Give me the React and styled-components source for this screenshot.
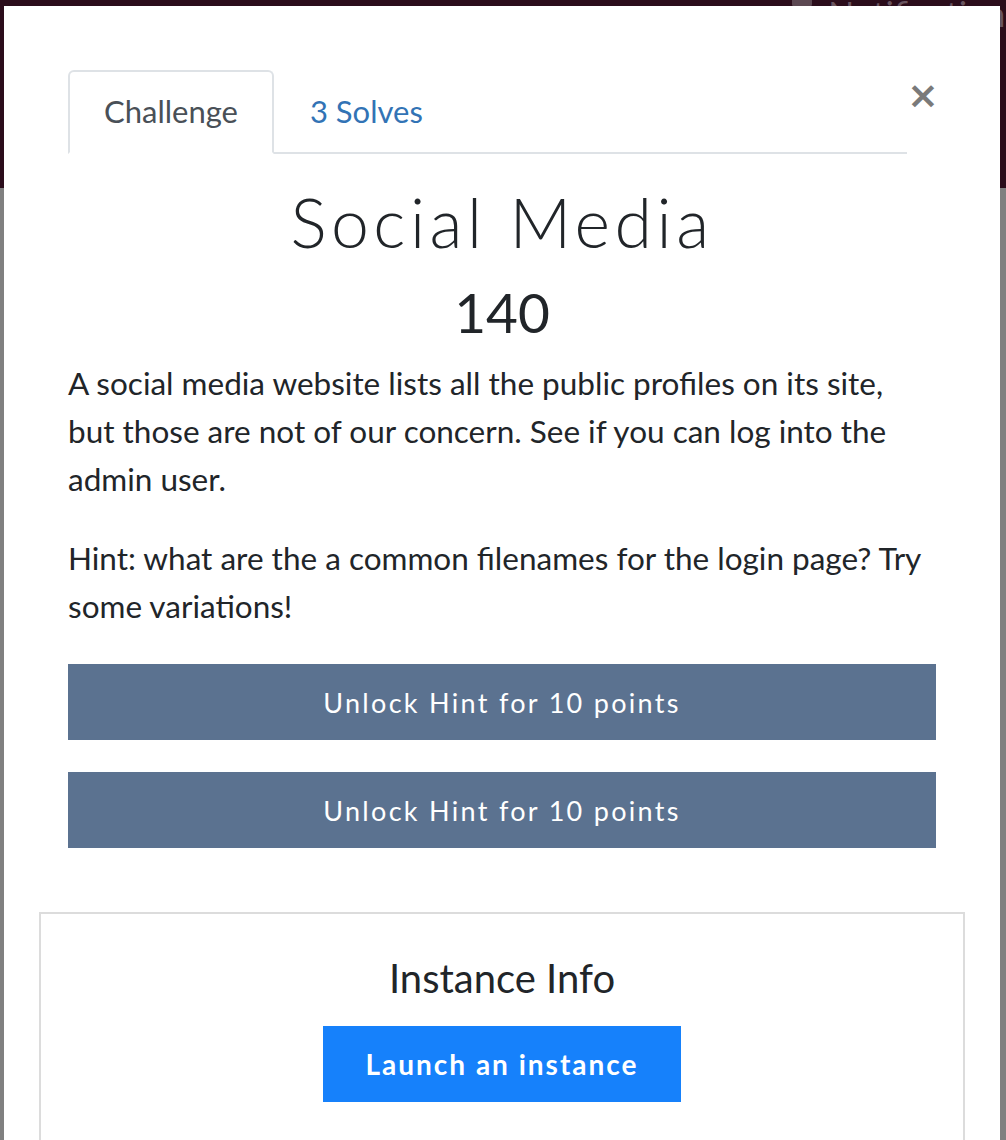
import styled, { createGlobalStyle } from "styled-components";

const GlobalStyle = createGlobalStyle`
  html, body {
    margin: 0;
    padding: 0;
    background: #808080;
    font-family: Lato, "Liberation Sans", sans-serif;
    overflow: hidden;
  }
`

const hints = [
  { id: 1, cost: 10 },
  { id: 2, cost: 10 },
];

const App = () => {
  return (
    <>
      <GlobalStyle />
      <Screen>
        <NavBar>
          <NavItem>
            <NavIcon />
            Notifications
          </NavItem>
        </NavBar>
        <PageBelow />

        <Modal>
          <HeaderRow>
            <Tabs>
              <Tab active>Challenge</Tab>
              <Tab>3 Solves</Tab>
            </Tabs>
            <Close>&times;</Close>
          </HeaderRow>

          <Title>Social Media</Title>
          <Value>140</Value>

          <Description>
            A social media website lists all the public profiles on its site,
            but those are not of our concern. See if you can log into the
            admin user.
          </Description>
          <Description>
            Hint: what are the a common filenames for the login page? Try
            some variations!
          </Description>

          <HintList>
            {hints.map((hint) => (
              <HintButton key={hint.id}>Unlock Hint for {hint.cost} points</HintButton>
            ))}
          </HintList>

          <InstanceBox>
            <InstanceTitle>Instance Info</InstanceTitle>
            <LaunchButton>Launch an instance</LaunchButton>
          </InstanceBox>
        </Modal>
      </Screen>
    </>
  )
}

export default App;

const Screen = styled.div`
  position: relative;
  height: 1140px;
  overflow: hidden;
`

const NavBar = styled.div`
  display: flex;
  justify-content: flex-end;
  align-items: flex-start;
  height: 188px;
  background: #2b0d1b;
`

const NavItem = styled.div`
  display: flex;
  align-items: flex-start;
  gap: 16px;
  margin-top: -3px;
  margin-right: -14px;
  font-size: 34px;
  line-height: 34px;
  color: #6a5560;
`

const NavIcon = styled.span`
  display: block;
  width: 20px;
  height: 14px;
  margin-top: -4px;
  background: #5c4852;
  border-radius: 0 0 3px 3px;
`

const PageBelow = styled.div`
  height: 952px;
  background: #808080;
`

const Modal = styled.div`
  position: absolute;
  top: 6px;
  left: 4px;
  width: 996px;
  bottom: -200px;
  box-sizing: border-box;
  background: #fff;
  padding: 64px 64px 0;
`

const HeaderRow = styled.div`
  display: flex;
  align-items: flex-start;
`

const Tabs = styled.div`
  display: flex;
  flex: 0 0 839px;
  border-bottom: 2px solid #dee2e6;
`

const Tab = styled.div`
  margin-bottom: -2px;
  padding: 19px 34px 21px;
  font-size: 31px;
  line-height: 40px;
  color: ${(p) => (p.active ? "#495057" : "#3273b5")};
  background: ${(p) => (p.active ? "#fff" : "transparent")};
  border: 2px solid ${(p) => (p.active ? "#dee2e6" : "transparent")};
  border-bottom-color: ${(p) => (p.active ? "#fff" : "transparent")};
  border-radius: 6px 6px 0 0;
`

const Close = styled.div`
  margin: 6px 0 0 0;
  width: 25px;
  font-family: "DejaVu Sans", sans-serif;
  font-size: 38px;
  font-weight: 700;
  line-height: 38px;
  color: #7a7a7a;
  text-align: center;
`

const Title = styled.h1`
  margin: 23px 0 0;
  text-align: center;
  font-size: 68px;
  font-weight: 300;
  letter-spacing: 4.5px;
  line-height: 90px;
  color: #212529;
`

const Value = styled.h2`
  margin: 10px 0 12px;
  text-align: center;
  font-size: 55px;
  font-weight: 400;
  line-height: 70px;
  color: #212529;
`

const Description = styled.p`
  max-width: 860px;
  margin: 0 0 31px;
  font-size: 31.5px;
  line-height: 48px;
  color: #212529;
`

const HintList = styled.div`
  display: flex;
  flex-direction: column;
  gap: 32px;
  margin-top: 34px;
`

const HintButton = styled.button`
  height: 76px;
  width: 100%;
  border: 0;
  border-radius: 0;
  background: #5b7290;
  color: #fff;
  font-family: Lato, "Liberation Sans", sans-serif;
  font-size: 27px;
  letter-spacing: 2.3px;
  cursor: pointer;
`

const InstanceBox = styled.div`
  display: flex;
  flex-direction: column;
  align-items: center;
  margin: 64px -29px 0;
  padding: 38px 0 60px;
  border: 2px solid #dcdcdc;
  border-bottom: 0;
`

const InstanceTitle = styled.h3`
  margin: 0 0 22px;
  font-size: 40px;
  font-weight: 400;
  line-height: 52px;
  color: #212529;
`

const LaunchButton = styled.button`
  width: 358px;
  height: 76px;
  border: 0;
  border-radius: 0;
  background: #1681fb;
  color: #fff;
  font-family: Lato, "Liberation Sans", sans-serif;
  font-size: 28px;
  font-weight: 700;
  letter-spacing: 2px;
  cursor: pointer;
`
